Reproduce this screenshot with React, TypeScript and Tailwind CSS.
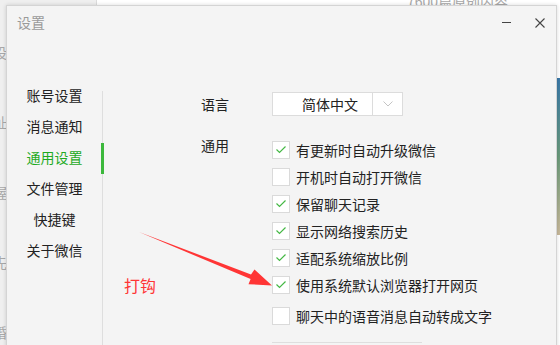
import { useState } from 'react'

const FONT = { fontFamily: '"Noto Sans CJK SC", "Noto Sans", sans-serif' }

const menu = ['账号设置', '消息通知', '通用设置', '文件管理', '快捷键', '关于微信']

const options = [
  { label: '有更新时自动升级微信', checked: true },
  { label: '开机时自动打开微信', checked: false },
  { label: '保留聊天记录', checked: true },
  { label: '显示网络搜索历史', checked: true },
  { label: '适配系统缩放比例', checked: true },
  { label: '使用系统默认浏览器打开网页', checked: true },
]

const Check = () => (
  <svg width="12" height="9" viewBox="0 0 12 9" fill="none">
    <path d="M1.5 4.5 L4.5 7.5 L10.5 1.5" stroke="#45b845" strokeWidth="1.2" />
  </svg>
)

const CheckRow = ({ label, checked, onToggle }: any) => (
  <div className="flex items-center h-[27px] cursor-pointer" onClick={onToggle}>
    <div className="w-[18px] h-[18px] bg-white border border-[#dadada] flex items-center justify-center">
      {checked && <Check />}
    </div>
    <span className="ml-[6px] text-[14px] text-[#222] leading-[20px]">{label}</span>
  </div>
)

const App = () => {
  const [active, setActive] = useState(2)
  const [checks, setChecks] = useState(options.map((o) => o.checked))
  const [voice, setVoice] = useState(false)

  return (
    <div className="relative w-[560px] h-[345px] overflow-hidden bg-white" style={FONT}>
      {/* page behind the window */}
      <div className="absolute left-0 top-0 w-[97px] h-[345px] bg-[#efefef] border-r border-[#dcdcdc]" />
      <div className="absolute left-[407px] top-[-9px] text-[14px] text-[#a8a8a8] whitespace-nowrap">7600篇原创内容</div>
      <div className="absolute left-[-7px] top-[42px] flex flex-col gap-[49px] text-[14px] text-[#a8a8a8]">
        <span>设</span>
        <span>址</span>
        <span>握</span>
        <span>先</span>
        <span>婚</span>
      </div>
      <div className="absolute left-[557px] top-[78px] w-[3px] h-[157px] bg-gradient-to-b from-[#3a78a8] via-[#6a9a7a] to-[#c8b89a]" />

      {/* settings window */}
      <div className="absolute left-[6px] top-[5px] w-[551px] h-[350px] bg-[#f4f4f4] border border-[#d4d4d4] shadow-[0_0_4px_rgba(0,0,0,0.15)] flex flex-col">
        <div className="h-[34px] flex items-center pl-[10px] pr-[11px]">
          <span className="text-[14px] text-[#9a9a9a] leading-[20px] -mt-[3px]">设置</span>
          <div className="ml-auto flex items-center gap-[24px] -mt-[1px]">
            <div className="w-[9px] h-px bg-[#444]" />
            <svg width="10" height="10" viewBox="0 0 10 10">
              <path d="M0.5 0.5 L9.5 9.5 M9.5 0.5 L0.5 9.5" stroke="#444" strokeWidth="1.1" />
            </svg>
          </div>
        </div>

        <div className="flex flex-1">
          <div className="w-[95px] pt-[40px] flex flex-col">
            {menu.map((m, i) => (
              <div
                key={m}
                onClick={() => setActive(i)}
                className={
                  'h-[31px] flex items-center justify-center text-[14px] cursor-pointer ' +
                  (i === active ? 'text-[#1faa1f]' : 'text-[#222]')
                }
              >
                {m}
              </div>
            ))}
          </div>

          <div className="relative mt-[51px] w-px bg-[#dedede]">
            <div
              className="absolute left-[-1px] w-[3px] h-[31px] bg-[#3cb83c]"
              style={{ top: 52 + (active - 2) * 31 }}
            />
          </div>

          <div className="pl-[98px] pt-[52px] flex flex-col">
            <div className="flex items-center h-[24px]">
              <span className="w-[71px] text-[14px] text-[#222]">语言</span>
              <div className="flex h-[24px] w-[131px] bg-white border border-[#dcdcdc]">
                <div className="w-[100px] border-r border-[#dcdcdc] flex items-center pl-[29px] text-[14px] text-[#222]">
                  简体中文
                </div>
                <div className="flex-1 flex items-center justify-center">
                  <svg width="10" height="6" viewBox="0 0 10 6" fill="none">
                    <path d="M0.5 0.5 L5 5 L9.5 0.5" stroke="#c4c4c4" />
                  </svg>
                </div>
              </div>
            </div>

            <div className="flex mt-[20px]">
              <span className="w-[71px] text-[14px] text-[#222] leading-[20px] -mt-[1px]">通用</span>
              <div className="flex flex-col">
                {options.map((o, i) => (
                  <CheckRow
                    key={o.label}
                    label={o.label}
                    checked={checks[i]}
                    onToggle={() => setChecks(checks.map((c, j) => (j === i ? !c : c)))}
                  />
                ))}
                <div className="mt-[4px]">
                  <CheckRow label="聊天中的语音消息自动转成文字" checked={voice} onToggle={() => setVoice(!voice)} />
                </div>
                <div className="mt-[13px] w-[150px] border-t border-[#dedede]" />
              </div>
            </div>
          </div>
        </div>
      </div>

      {/* annotation */}
      <span className="absolute left-[124px] top-[274px] text-[16px] leading-[22px] text-[#ff3535]">打钩</span>
      <svg className="absolute left-0 top-0" width="560" height="345" viewBox="0 0 560 345">
        <polygon
          points="139,232 251,274.5 254.5,269.4 272,285.5 248.5,284.2 250.6,279.1"
          fill="#ff3535"
        />
      </svg>
    </div>
  )
}

export default App
